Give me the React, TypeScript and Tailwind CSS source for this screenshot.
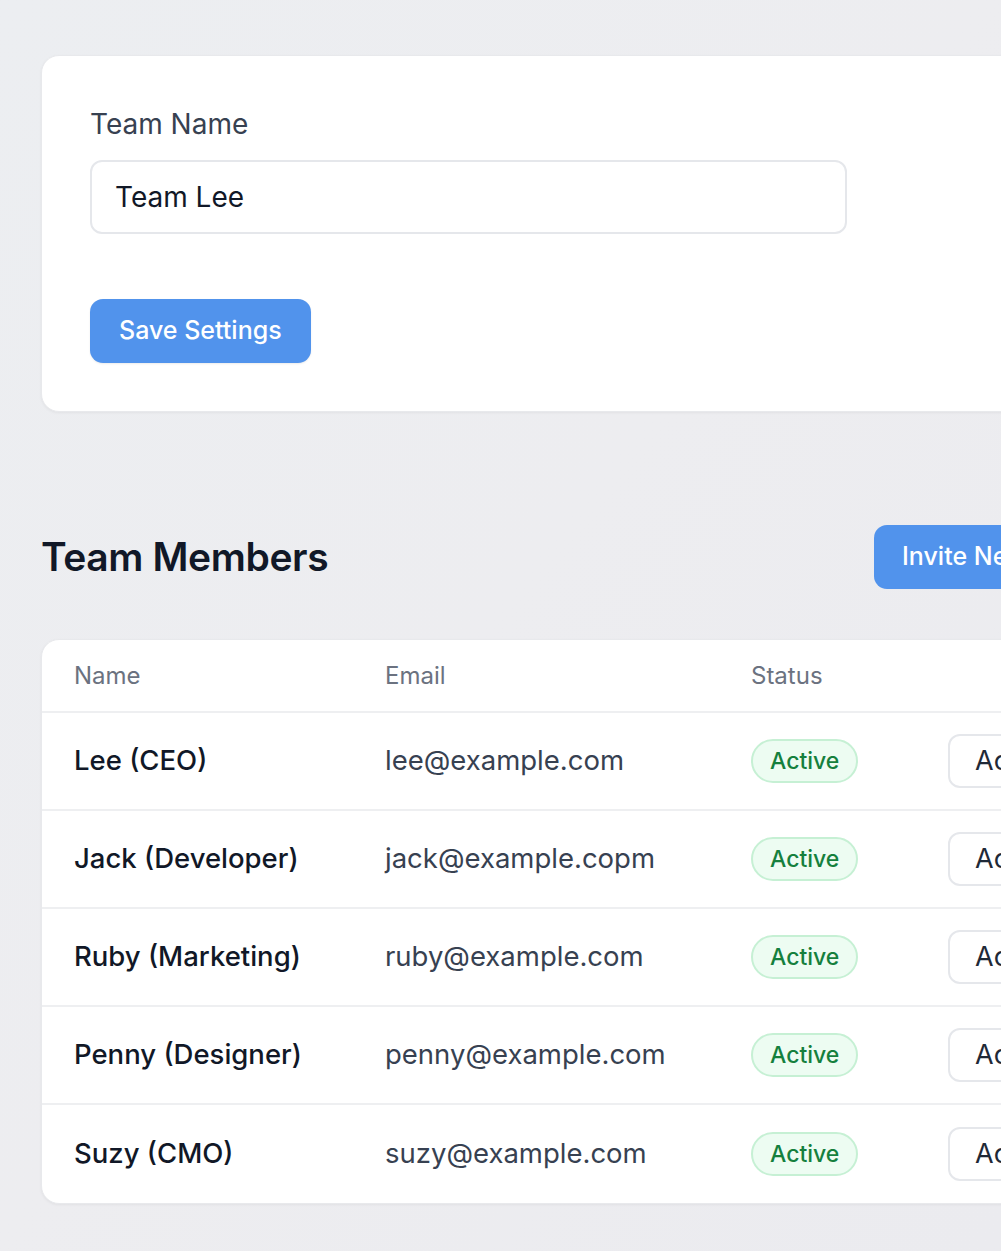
const members = [
  { name: "Lee (CEO)", email: "lee@example.com" },
  { name: "Jack (Developer)", email: "jack@example.copm" },
  { name: "Ruby (Marketing)", email: "ruby@example.com" },
  { name: "Penny (Designer)", email: "penny@example.com" },
  { name: "Suzy (CMO)", email: "suzy@example.com" },
];

export default function App() {
  return (
    <div className="w-[1001px] h-[1251px] overflow-hidden bg-gradient-to-br from-[#eceef1] via-[#ededf0] to-[#ebebef] font-['Inter','Noto_Sans',sans-serif]">
      <div className="w-[1240px] pl-[41px] pt-[55px]">
        {/* Settings card */}
        <section className="bg-white rounded-[18px] border border-[#e8e9ec] shadow-[0_1px_3px_rgba(0,0,0,0.05)] px-[48px] pt-[50px] pb-[48px]">
          <label className="block text-[28px] leading-[36px] text-[#374151]">Team Name</label>
          <input
            readOnly
            value="Team Lee"
            className="mt-[18px] block w-[757px] h-[74px] rounded-[12px] border-2 border-[#e5e7eb] px-[23px] text-[28px] text-[#111827] outline-none"
          />
          <button className="mt-[65px] h-[64px] px-[29px] rounded-[13px] bg-[#5193ec] text-white text-[25px] font-medium shadow-[0_1px_2px_rgba(0,0,0,0.08)]">
            Save Settings
          </button>
        </section>

        {/* Members header */}
        <div className="mt-[113px] flex items-center h-[64px]">
          <h2 className="w-[833px] text-[39px] font-semibold text-[#111827] tracking-[-0.01em]">Team Members</h2>
          <button className="h-[64px] px-[28px] rounded-[13px] bg-[#5193ec] text-white text-[25px] font-medium whitespace-nowrap">
            Invite New Member
          </button>
        </div>

        {/* Members table */}
        <div className="mt-[50px] bg-white rounded-[18px] border border-[#e8e9ec] shadow-[0_1px_3px_rgba(0,0,0,0.05)] overflow-hidden">
          <div className="flex items-center h-[73px] border-b-2 border-[#eeeff1] text-[24px] text-[#6b7280]">
            <div className="w-[343px] pl-[32px]">Name</div>
            <div className="w-[366px]">Email</div>
            <div className="w-[197px]">Status</div>
            <div className="w-[220px]"></div>
          </div>
          {members.map((m, i) => (
            <div
              key={m.email}
              className={`flex items-center h-[98px] ${i < members.length - 1 ? "border-b-2 border-[#eeeff1]" : ""}`}
            >
              <div className="w-[343px] pl-[32px] text-[27.5px] font-medium text-[#111827]">{m.name}</div>
              <div className="w-[366px] text-[27.5px] text-[#374151]">{m.email}</div>
              <div className="w-[197px]">
                <span className="inline-flex items-center h-[44px] px-[17px] rounded-full bg-[#edfcf2] border-2 border-[#c6f0d4] text-[23px] font-medium text-[#15803d]">
                  Active
                </span>
              </div>
              <div>
                <button className="h-[54px] px-[25px] rounded-[12px] border-2 border-[#e5e7eb] bg-white text-[27px] text-[#1f2937] whitespace-nowrap">
                  Actions
                </button>
              </div>
            </div>
          ))}
        </div>
      </div>
    </div>
  );
}
